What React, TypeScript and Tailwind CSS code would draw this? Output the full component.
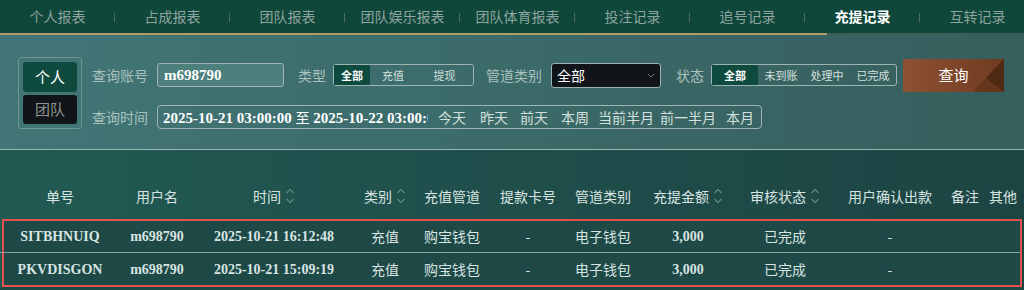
import React from "react";

const tabs = ["个人报表", "占成报表", "团队报表", "团队娱乐报表", "团队体育报表", "投注记录", "追号记录", "充提记录", "互转记录"];

const gridCols = "grid grid-cols-[120px_74px_160px_62px_72px_80px_70px_100px_94px_116px_34px_42px]";

const headers: { t: string; sort?: boolean }[] = [
  { t: "单号" },
  { t: "用户名" },
  { t: "时间", sort: true },
  { t: "类别", sort: true },
  { t: "充值管道" },
  { t: "提款卡号" },
  { t: "管道类别" },
  { t: "充提金额", sort: true },
  { t: "审核状态", sort: true },
  { t: "用户确认出款" },
  { t: "备注" },
  { t: "其他" },
];

const rows = [
  ["SITBHNUIQ", "m698790", "2025-10-21 16:12:48", "充值", "购宝钱包", "-", "电子钱包", "3,000", "已完成", "-", "", ""],
  ["PKVDISGON", "m698790", "2025-10-21 15:09:19", "充值", "购宝钱包", "-", "电子钱包", "3,000", "已完成", "-", "", ""],
];

const serifCols = new Set([0, 1, 2, 7]);

const sans = "font-['Noto_Sans_CJK_SC','Noto_Sans',sans-serif]";
const serif = "font-['Liberation_Serif','Noto_Sans_CJK_SC',serif]";

function SortIcon() {
  return (
    <svg width="10" height="18" viewBox="0 0 10 18" className="ml-1" fill="none" stroke="#5f8a84" strokeWidth="1.2">
      <path d="M1.5 6 L5 2.5 L8.5 6" />
      <path d="M1.5 12 L5 15.5 L8.5 12" />
    </svg>
  );
}

export default function App() {
  return (
    <div className={`w-[1024px] h-[290px] overflow-hidden bg-[#1d4a47] ${sans}`}>
      {/* Tab bar */}
      <div className="h-[35px] bg-[#0f473b] relative">
        <div className="flex h-[33px] items-center">
          {tabs.map((t, i) => (
            <div key={t} className="w-[115px] shrink-0 flex items-center relative h-full">
              <div
                className={`flex-1 text-center text-[14px] ${i === 7 ? "text-white font-bold" : "text-[#8ea49e]"}`}
              >
                {t}
              </div>
              {i < tabs.length - 1 && <div className="absolute right-0 top-[13px] w-px h-[9px] bg-[#4d6c64]" />}
            </div>
          ))}
        </div>
        <div className="flex h-[2px]">
          <div className="w-[827px] bg-[#b39a6a]" />
          <div className="flex-1 bg-[#3c5e58]" />
        </div>
      </div>

      {/* Filter area */}
      <div className="h-[115px] bg-gradient-to-r from-[#427676] via-[#3b6a69] to-[#365e5d] border-b border-[#9fb3b0] flex items-start pt-[22px] pl-[18px]">
        <div className="w-[64px] h-[72px] border border-[#6e9590] rounded-[3px] p-[4px] flex flex-col gap-[3px]">
          <div className="h-[30px] rounded-[3px] bg-[#0f4a3e] text-white text-[15px] flex items-center justify-center">个人</div>
          <div className="h-[29px] rounded-[3px] bg-[#111418] text-[#8e9693] text-[15px] flex items-center justify-center">团队</div>
        </div>
        <div className="ml-[10px] flex flex-col">
          <div className="flex items-center h-[34px] mt-[1px]">
            <span className="text-[14px] text-[#a9c2be] w-[65px]">查询账号</span>
            <div className="w-[127px] h-[24px] border border-[#9cb5b1] rounded-[3px] bg-[#4d7f7d] flex items-center px-[6px]">
              <span className={`${serif} font-bold text-[15px] text-white`}>m698790</span>
            </div>
            <span className="ml-[14px] text-[14px] text-[#a9c2be]">类型</span>
            <div className="ml-[7px] w-[141px] h-[22px] border border-[#9cb5b1] rounded-[3px] flex items-stretch text-[11px] text-[#d5e0de]">
              <div className="w-[36px] bg-[#0f4a3e] text-white font-bold flex items-center justify-center">全部</div>
              <div className="w-[46px] flex items-center justify-center">充值</div>
              <div className="flex-1 flex items-center justify-center">提现</div>
            </div>
            <span className="ml-[12px] text-[14px] text-[#a9c2be]">管道类别</span>
            <div className="ml-[9px] w-[110px] h-[25px] border border-[#9cb5b1] rounded-[3px] bg-[#111418] flex items-center justify-between px-[5px]">
              <span className="text-white text-[14px]">全部</span>
              <svg width="8" height="5" viewBox="0 0 8 5" fill="none" stroke="#6d7877" strokeWidth="1">
                <path d="M1 1 L4 4 L7 1" />
              </svg>
            </div>
            <span className="ml-[15px] text-[14px] text-[#a9c2be]">状态</span>
            <div className="ml-[7px] w-[186px] h-[22px] border border-[#9cb5b1] rounded-[3px] flex items-stretch text-[11px] text-[#d5e0de]">
              <div className="w-[46px] bg-[#0f4a3e] text-white font-bold flex items-center justify-center">全部</div>
              <div className="w-[46px] flex items-center justify-center">未到账</div>
              <div className="w-[46px] flex items-center justify-center">处理中</div>
              <div className="flex-1 flex items-center justify-center">已完成</div>
            </div>
            <div className="ml-[6px] w-[101px] h-[33px] relative bg-gradient-to-r from-[#8f5134] to-[#6e3b20] flex items-center justify-center overflow-hidden">
              <svg className="absolute inset-0" width="101" height="33" viewBox="0 0 101 33">
                <polygon points="101,0 83,19 101,33" fill="#4e2810" />
                <polygon points="83,19 101,33 70,33" fill="#5e3119" opacity="0.6" />
              </svg>
              <span className="relative text-white text-[15px]">查询</span>
            </div>
          </div>
          <div className="flex items-center h-[24px] mt-[13px]">
            <span className="text-[14px] text-[#a9c2be] w-[65px]">查询时间</span>
            <div className="w-[605px] h-[24px] border border-[#9cb5b1] rounded-[4px] flex items-center pl-[5px] overflow-hidden">
              <div className="w-[265px] overflow-hidden whitespace-nowrap">
                <span className={`${serif} font-bold text-[15px] text-white`}>2025-10-21 03:00:00 </span>
                <span className="text-[14px] text-white">至</span>
                <span className={`${serif} font-bold text-[15px] text-white`}> 2025-10-22 03:00:00</span>
              </div>
              <div className="flex items-center text-[14px] text-[#d5e0de] ml-[10px] whitespace-nowrap">
                <span>今天</span>
                <span className="ml-[14px]">昨天</span>
                <span className="ml-[12px]">前天</span>
                <span className="ml-[13px]">本周</span>
                <span className="ml-[9px]">当前半月</span>
                <span className="ml-[6px]">前一半月</span>
                <span className="ml-[10px]">本月</span>
              </div>
            </div>
          </div>
        </div>
      </div>

      {/* Table */}
      <div className="bg-gradient-to-r from-[#215a53] via-[#1f4e4b] to-[#1c4443]">
        <div className={`${gridCols} h-[69px] items-end pb-[13px]`}>
          {headers.map((h, i) => (
            <div key={i} className="flex items-center justify-center text-[14px] text-[#d8e4e1] h-[20px] whitespace-nowrap">
              <span>{h.t}</span>
              {h.sort && <SortIcon />}
            </div>
          ))}
        </div>
        <div className="mx-[2px] border-2 border-[#e2504f] bg-[#1e4947]">
          {rows.map((r, ri) => (
            <div
              key={ri}
              className={`${gridCols} -ml-[4px] h-[32px] items-center ${ri === 0 ? "border-b border-[#8aa8a3]" : ""}`}
            >
              {r.map((c, ci) => (
                <div
                  key={ci}
                  className={`text-center whitespace-nowrap text-[#d8e4e1] text-[14px] ${serifCols.has(ci) ? `${serif} font-bold` : ""}`}
                >
                  {c}
                </div>
              ))}
            </div>
          ))}
        </div>
      </div>
    </div>
  );
}
